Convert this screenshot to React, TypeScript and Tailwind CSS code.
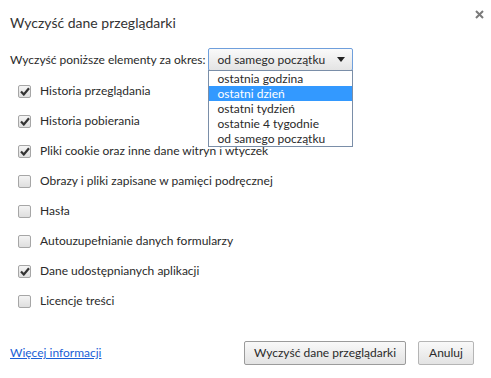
import { useState } from 'react';

const items = [
  { label: 'Historia przeglądania', checked: true },
  { label: 'Historia pobierania', checked: true },
  { label: 'Pliki cookie oraz inne dane witryn i wtyczek', checked: true },
  { label: 'Obrazy i pliki zapisane w pamięci podręcznej', checked: false },
  { label: 'Hasła', checked: false },
  { label: 'Autouzupełnianie danych formularzy', checked: false },
  { label: 'Dane udostępnianych aplikacji', checked: true },
  { label: 'Licencje treści', checked: false },
];

const periods = ['ostatnia godzina', 'ostatni dzień', 'ostatni tydzień', 'ostatnie 4 tygodnie', 'od samego początku'];

const Check = ({ on }: { on: boolean }) => (
  <span className="w-[13px] h-[13px] rounded-[2px] border border-[#a6a6a6] bg-gradient-to-b from-[#f4f4f4] to-[#dedede] flex items-center justify-center shrink-0">
    {on && (
      <svg width="10" height="9" viewBox="0 0 10 9">
        <path d="M1 4.5 L3.8 7.5 L9 1.2" fill="none" stroke="#333" strokeWidth="2.2" />
      </svg>
    )}
  </span>
);

export default function App() {
  const [checks, setChecks] = useState(items.map((i) => i.checked));

  return (
    <div
      className="relative w-[491px] h-[378px] bg-white text-[#2a2a2a] text-[12px] px-[10px]"
      style={{ fontFamily: 'Lato, "Noto Sans", sans-serif' }}
    >
      {/* close */}
      <svg className="absolute top-[10px] right-[7px]" width="9" height="9" viewBox="0 0 9 9">
        <path d="M1 1 L8 8 M8 1 L1 8" stroke="#7a7a7a" strokeWidth="2" />
      </svg>

      <div className="pt-[13px] h-[48px] text-[14px] leading-[20px] text-[#333]">Wyczyść dane przeglądarki</div>

      <div className="flex items-center h-[23px]">
        <span className="mr-[2px] whitespace-nowrap">Wyczyść poniższe elementy za okres:</span>
        <div className="relative">
          <div className="w-[145px] h-[23px] border border-[#6f9fdc] rounded-[2px] bg-gradient-to-b from-[#fafafa] to-[#e4e4e4] flex items-center pl-[9px] pr-[7px]">
            <span className="flex-1 whitespace-nowrap">od samego początku</span>
            <svg width="8" height="5" viewBox="0 0 8 5">
              <path d="M0 0 L8 0 L4 5 Z" fill="#222" />
            </svg>
          </div>
          <div className="absolute top-[22px] left-0 w-[145px] border border-[#7a8ea8] bg-white z-10">
            {periods.map((p, i) => (
              <div
                key={p}
                className={`h-[15px] leading-[15px] pl-[9px] whitespace-nowrap ${i === 1 ? 'bg-[#3399ff] text-white' : ''}`}
              >
                {p}
              </div>
            ))}
          </div>
        </div>
      </div>

      <div className="flex flex-col mt-[5px] pl-[8px]">
        {items.map((it, i) => (
          <label
            key={it.label}
            className="flex items-center h-[30px] gap-[9px]"
            onClick={() => setChecks((c) => c.map((v, j) => (j === i ? !v : v)))}
          >
            <Check on={checks[i]} />
            <span className="whitespace-nowrap">{it.label}</span>
          </label>
        ))}
      </div>

      <div className="flex items-center mt-[25px]">
        <a href="#" className="text-[#1a5fd6] underline flex-1 whitespace-nowrap">
          Więcej informacji
        </a>
        <button className="h-[24px] w-[162px] whitespace-nowrap border border-[#9b9b9b] rounded-[2px] bg-gradient-to-b from-[#f9f9f9] to-[#e3e3e3] mr-[12px]">
          Wyczyść dane przeglądarki
        </button>
        <button className="h-[24px] w-[56px] border border-[#b5b5b5] rounded-[2px] bg-gradient-to-b from-[#f9f9f9] to-[#e3e3e3] mr-[7px]">
          Anuluj
        </button>
      </div>
    </div>
  );
}
